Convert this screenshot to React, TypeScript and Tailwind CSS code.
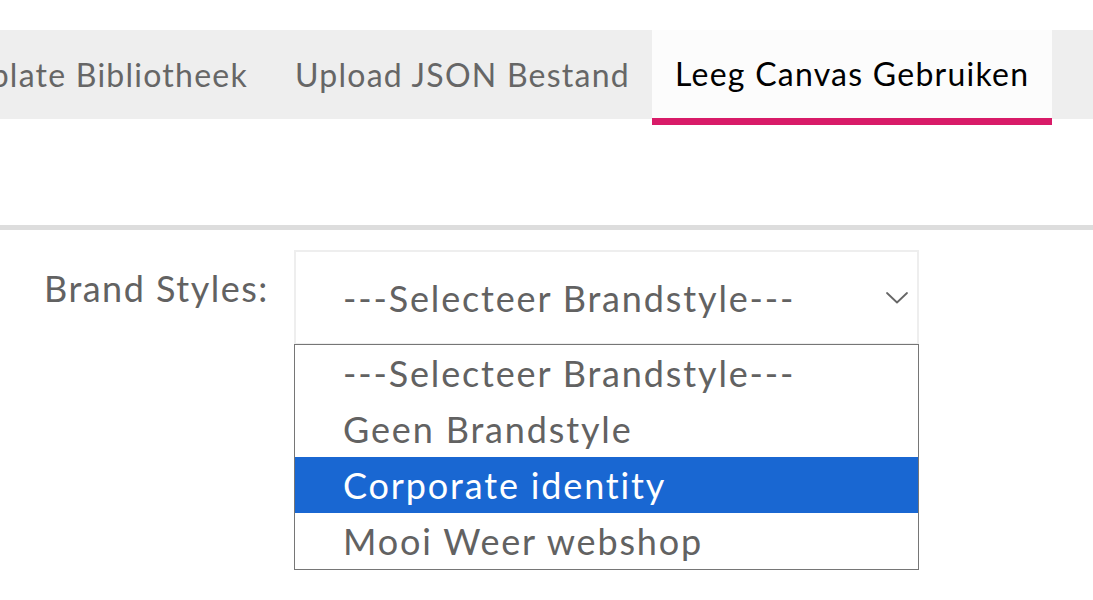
import React from 'react';

const tabs = [
  { label: 'Template Bibliotheek', active: false },
  { label: 'Upload JSON Bestand', active: false },
  { label: 'Leeg Canvas Gebruiken', active: true },
];

const options = ['---Selecteer Brandstyle---', 'Geen Brandstyle', 'Corporate identity', 'Mooi Weer webshop'];

const Chevron: React.FC = () => (
  <svg width="22" height="12" viewBox="0 0 22 12" fill="none" className="shrink-0">
    <polyline points="1,1 11,10.5 21,1" stroke="#666" strokeWidth="1.8" strokeLinecap="round" strokeLinejoin="round" />
  </svg>
);

export default function App() {
  return (
    <div className="min-h-[600px] bg-white pt-[30px] font-['Lato',sans-serif] overflow-hidden">
      {/* Tabs */}
      <div className="flex h-[89px] items-start bg-[#eeeeee]">
        {tabs.map((tab, i) =>
          tab.active ? (
            <div
              key={tab.label}
              className="flex h-[95px] shrink-0 items-center border-b-[7px] border-[#d81b68] bg-[#fcfcfc] px-[23px] text-[32px] tracking-[1.25px] text-black whitespace-nowrap"
            >
              {tab.label}
            </div>
          ) : i === 0 ? (
            <div
              key={tab.label}
              className="flex h-full w-[273px] shrink-0 items-center justify-end overflow-hidden pr-[25px] text-[32px] tracking-[1.25px] text-[#666] whitespace-nowrap"
            >
              {tab.label}
            </div>
          ) : (
            <div
              key={tab.label}
              className="flex h-full shrink-0 items-center px-[22px] text-[32px] tracking-[1.25px] text-[#666] whitespace-nowrap"
            >
              {tab.label}
            </div>
          )
        )}
      </div>

      <div className="mt-[106px] h-[5px] bg-[#dddddd]" />

      {/* Form */}
      <div className="mt-[20px] flex items-start pl-[44px]">
        <label className="mt-[17px] w-[250px] shrink-0 text-[36px] leading-[43px] tracking-[1.5px] text-[#626262]">
          Brand Styles:
        </label>
        <div className="w-[625px] shrink-0">
          <div className="flex h-[95px] items-center justify-between border-2 border-[#eeeeee] pl-[47px] pr-[9px] text-[36px] tracking-[1.85px] text-[#626262]">
            <span>---Selecteer Brandstyle---</span>
            <Chevron />
          </div>
          <ul className="-mt-px border border-[#767676] bg-white">
            {options.map((opt, i) => (
              <li
                key={opt}
                className={
                  i === 2
                    ? 'flex h-[56px] items-center bg-[#1967d2] pl-[48px] text-[36px] tracking-[1.85px] text-white'
                    : 'flex h-[56px] items-center pl-[48px] text-[36px] tracking-[1.85px] text-[#626262]'
                }
              >
                {opt}
              </li>
            ))}
          </ul>
        </div>
      </div>
    </div>
  );
}
